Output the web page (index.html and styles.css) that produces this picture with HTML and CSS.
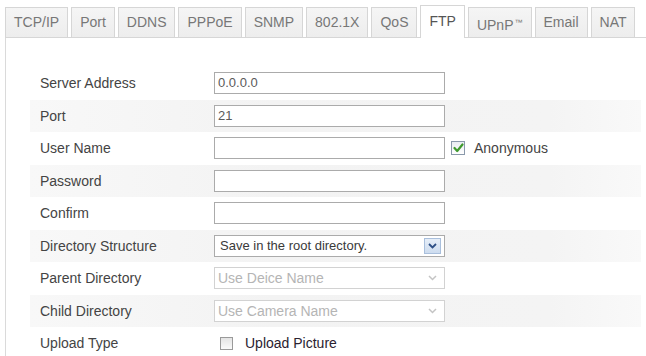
FILE: index.html
```html
<!DOCTYPE html>
<html>
<head>
<meta charset="utf-8">
<link rel="stylesheet" href="styles.css">
</head>
<body>
<div class="page">
  <ul class="tabs">
    <li class="tab">TCP/IP</li>
    <li class="tab">Port</li>
    <li class="tab">DDNS</li>
    <li class="tab">PPPoE</li>
    <li class="tab">SNMP</li>
    <li class="tab">802.1X</li>
    <li class="tab">QoS</li>
    <li class="tab active">FTP</li>
    <li class="tab">UPnP<span class="tm">™</span></li>
    <li class="tab">Email</li>
    <li class="tab">NAT</li>
  </ul>
  <div class="panel">
    <div class="form">
      <div class="row">
        <span class="label">Server Address</span>
        <span class="box">0.0.0.0</span>
      </div>
      <div class="row alt">
        <span class="label">Port</span>
        <span class="box">21</span>
      </div>
      <div class="row">
        <span class="label">User Name</span>
        <span class="box"></span>
        <span class="check checked"><svg width="11" height="10" viewBox="0 0 11 10"><path d="M1.5 5 L4.2 8 L9.5 1.5" fill="none" stroke="#3f9a2e" stroke-width="2.2" stroke-linejoin="round" stroke-linecap="round"/></svg></span>
        <span class="check-text">Anonymous</span>
      </div>
      <div class="row alt">
        <span class="label">Password</span>
        <span class="box"></span>
      </div>
      <div class="row">
        <span class="label">Confirm</span>
        <span class="box"></span>
      </div>
      <div class="row alt">
        <span class="label">Directory Structure</span>
        <span class="box select">Save in the root directory.
          <span class="arrow"><svg width="9" height="6" viewBox="0 0 9 6"><path d="M1 1 L4.5 4.5 L8 1" fill="none" stroke="#2d4f86" stroke-width="1.8"/></svg></span>
        </span>
      </div>
      <div class="row">
        <span class="label">Parent Directory</span>
        <span class="box select disabled">Use Deice Name
          <span class="arrow"><svg width="9" height="6" viewBox="0 0 9 6"><path d="M1 1 L4.5 4.5 L8 1" fill="none" stroke="#c4c4c4" stroke-width="1.5"/></svg></span>
        </span>
      </div>
      <div class="row alt">
        <span class="label">Child Directory</span>
        <span class="box select disabled">Use Camera Name
          <span class="arrow"><svg width="9" height="6" viewBox="0 0 9 6"><path d="M1 1 L4.5 4.5 L8 1" fill="none" stroke="#c4c4c4" stroke-width="1.5"/></svg></span>
        </span>
      </div>
      <div class="row">
        <span class="label">Upload Type</span>
        <span class="check plain"></span>
        <span class="check-text strong">Upload Picture</span>
      </div>
    </div>
  </div>
</div>
</body>
</html>
```
FILE: styles.css
```css
html, body {
  margin: 0;
  background: #ffffff;
}
body {
  font-family: "Liberation Sans", Arial, sans-serif;
  font-size: 14px;
  color: #444444;
  overflow: hidden;
}
.page {
  padding: 5px 0 0 5px;
}
.tabs {
  display: flex;
  align-items: flex-end;
  gap: 3px;
  margin: 0;
  padding: 0;
  list-style: none;
  height: 32px;
  width: 641px;
  border-bottom: 1px solid #d6d6d6;
}
.tab {
  height: 29px;
  line-height: 29px;
  padding: 0 8px;
  border: 1px solid #d6d6d6;
  border-bottom: none;
  background: linear-gradient(#f5f5f5, #ededed);
  color: #777777;
  white-space: nowrap;
}
.tab.active {
  height: 32px;
  line-height: 31px;
  margin-bottom: -1px;
  background: #ffffff;
  color: #555555;
}
.tm {
  font-size: 8px;
  vertical-align: 5px;
  margin-left: 1px;
}
.panel {
  border-left: 1px solid #dadada;
  height: 320px;
}
.form {
  padding-top: 29px;
  margin-left: 24px;
  margin-right: 5px;
}
.row {
  display: flex;
  align-items: center;
  height: 32.5px;
  padding-left: 10px;
}
.row.alt {
  background: linear-gradient(90deg, #f8f8f8, #f3f3f3 40%, #f4f4f4 85%, #f9f9f9);
}
.label {
  width: 174px;
  flex: none;
  color: #444444;
}
.box {
  position: relative;
  box-sizing: border-box;
  width: 231px;
  height: 22px;
  line-height: 20px;
  padding-left: 3px;
  border: 1px solid #ababab;
  background: #ffffff;
  font-size: 13px;
  color: #5a5a5a;
}
.select {
  color: #3a3a3a;
  padding-left: 5px;
}
.select.disabled {
  border-color: #d2d2d2;
  color: #b5b5b5;
  font-size: 14px;
  padding-left: 3px;
}
.arrow {
  position: absolute;
  right: 3px;
  top: 2px;
  box-sizing: border-box;
  width: 17px;
  height: 16px;
  display: flex;
  align-items: center;
  justify-content: center;
  background: linear-gradient(#e6eef8, #cddcef);
  border: 1px solid #a9bfdc;
}
.disabled .arrow {
  background: none;
  border: none;
}
.check {
  box-sizing: border-box;
  width: 14px;
  height: 14px;
  flex: none;
  display: flex;
  align-items: center;
  justify-content: center;
  border: 1px solid #8a99ab;
  background: linear-gradient(#e9edf2, #ffffff);
}
.check.checked {
  margin-left: 6px;
}
.check.plain {
  width: 13px;
  height: 13px;
  margin-left: 6px;
  border-color: #9a9a9a;
  background: linear-gradient(#e4e4e4, #fafafa);
}
.check-text {
  margin-left: 9px;
  color: #444444;
}
.check-text.strong {
  margin-left: 12px;
  color: #2a2230;
}
```
